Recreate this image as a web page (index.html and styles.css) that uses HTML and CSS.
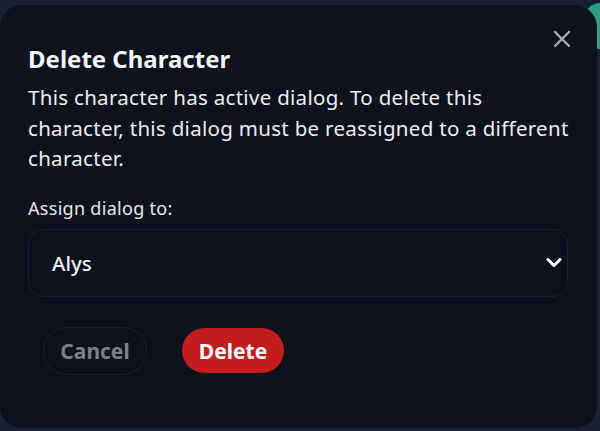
FILE: index.html
```html
<!DOCTYPE html>
<html lang="en">
<head>
<meta charset="utf-8">
<title>Delete Character</title>
<link rel="stylesheet" href="styles.css">
</head>
<body>
<div class="backdrop-pill"></div>
<div class="dialog" role="dialog" aria-labelledby="dlg-title">
  <button class="close" aria-label="Close">
    <svg width="18" height="18" viewBox="0 0 18 18"><path d="M2 2 L16 16 M16 2 L2 16" stroke="#a9abb0" stroke-width="2.4" stroke-linecap="round" fill="none"/></svg>
  </button>
  <h2 id="dlg-title" class="title">Delete Character</h2>
  <p class="desc">This character has active dialog. To delete this character, this dialog must be reassigned to a different character.</p>
  <label class="label">Assign dialog to:</label>
  <div class="select">
    <span class="select-value">Alys</span>
    <svg class="chev" width="16" height="11" viewBox="0 0 16 11"><polyline points="2,2.5 8,8.5 14,2.5" stroke="#ffffff" stroke-width="3" fill="none" stroke-linecap="round" stroke-linejoin="round"/></svg>
  </div>
  <div class="actions">
    <button class="btn btn-cancel">Cancel</button>
    <button class="btn btn-delete">Delete</button>
  </div>
</div>
</body>
</html>
```
FILE: styles.css
```css
html, body {
  margin: 0;
  padding: 0;
}
body {
  width: 600px;
  height: 431px;
  background: #182034;
  overflow: hidden;
  position: relative;
  font-family: "Noto Sans", "Open Sans", sans-serif;
}
.backdrop-pill {
  position: absolute;
  left: 584px;
  top: 3px;
  width: 16px;
  height: 46px;
  border-radius: 20px 0 0 20px;
  background: #27a17f;
}
.dialog {
  position: relative;
  box-sizing: border-box;
  width: 597px;
  height: 423px;
  margin-top: 5px;
  background: #0e121d;
  border-radius: 22px;
  padding: 39px 25px 0 28px;
  display: flex;
  flex-direction: column;
  color: #f1f2f4;
}
.close {
  position: absolute;
  top: 24px;
  right: 25px;
  width: 20px;
  height: 20px;
  padding: 0;
  border: 0;
  background: transparent;
  display: flex;
  align-items: center;
  justify-content: center;
}
.title {
  margin: 0;
  font-size: 24px;
  line-height: 30px;
  font-weight: 700;
  color: #f4f5f7;
}
.desc {
  margin: 8px 0 0 0;
  font-size: 20.5px;
  letter-spacing: 0.3px;
  line-height: 30.5px;
  color: #eceef1;
}
.label {
  margin-top: 23px;
  font-size: 18px;
  letter-spacing: 0.3px;
  line-height: 22px;
  color: #e6e8eb;
}
.select {
  margin-top: 10px;
  box-sizing: border-box;
  height: 68px;
  width: 540px;
  border: 1.5px solid #1d2230;
  border-radius: 15px;
  display: flex;
  align-items: center;
  justify-content: space-between;
  padding: 0 5px 0 23px;
}
.select-value {
  font-size: 20.5px;
  font-weight: 500;
  color: #f2f3f5;
}
.actions {
  margin-top: 30px;
  padding-left: 15px;
  display: flex;
  align-items: center;
  gap: 35px;
}
.btn {
  font-family: "Noto Sans", "Open Sans", sans-serif;
  font-size: 21px;
  font-weight: 700;
  border-radius: 24px;
  cursor: pointer;
  padding: 0;
}
.btn-cancel {
  width: 104px;
  height: 48px;
  background: transparent;
  border: 1.5px solid #1e2330;
  color: #7e8086;
}
.btn-delete {
  width: 102px;
  height: 45px;
  background: #c41d1d;
  border: 0;
  color: #ffffff;
}
```
